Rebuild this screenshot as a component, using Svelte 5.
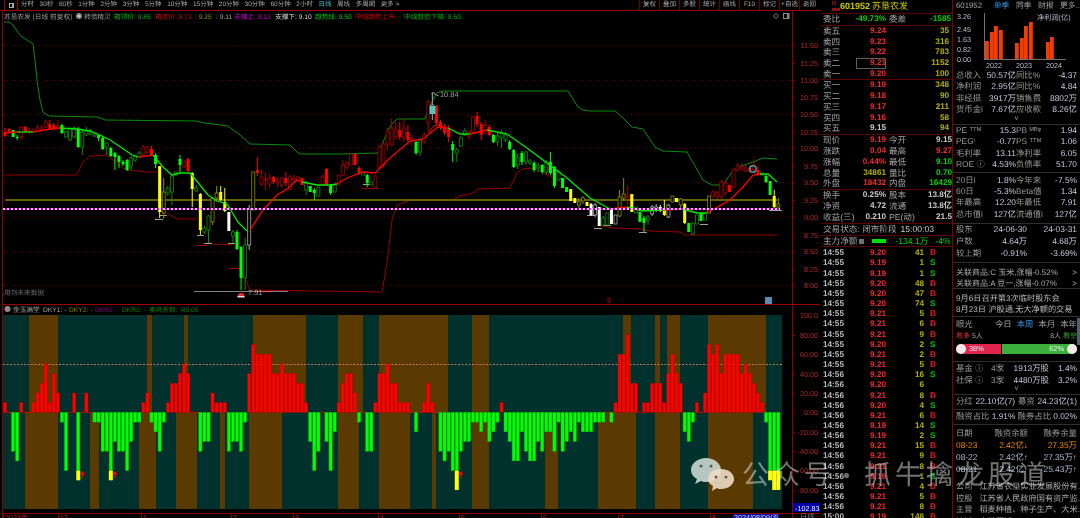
<script>
	const tabs = ['分时','30秒','60秒','1分钟','2分钟','3分钟','5分钟','10分钟','15分钟','20分钟','30分钟','60分钟','2小时','日线','周线','多周期','更多 >'];
	const tools = ['复权','叠加','多股','统计','画线','F10','标记','+自选','返回'];

	const legend = [
		[4,'苏垦农发 (日线 前复权)','#9a9a9a'],[84,'转债精灵','#9a9a9a'],[114,'箱顶价: 9.85','#00b000'],
		[155,'箱底价: 8.73','#c01010'],[195,': 9.25','#909000'],[216,': 9.11','#a0a0a0'],
		[234,'支撑上: 9.12','#d000d0'],[275,'支撑下: 9.10','#d8d8d8'],[315,'趋势线: 9.50','#00c800'],
		[355,'中线趋势上升: -','#e00000'],[404,'中线趋势下降: 9.50','#00b000']
	];
	const subLegend = [
		[13,'金玉满堂','#a0a0a0'],[43,'DKY1: -','#a0a0a0'],[69,'DKY2: -','#808000'],
		[95,'DKR1: -','#800080'],[122,'DKR2: -','#008000'],[149,'素高系数: -80.00','#008000']
	];
	const priceAxis = [[45,'11.50'],[63,'11.25'],[80,'11.00'],[97,'10.75'],[114,'10.50'],[132,'10.25'],[148,'10.00'],[166,'9.75'],[182,'9.50'],[200,'9.25'],[217,'9.00'],[235,'8.75'],[251,'8.50'],[269,'8.25'],[285,'8.00']];
	const gridY = [45,80,114,148,182,217,251,285];
	const subAxis = [[315,'100.0'],[335,'80.00'],[354,'60.00'],[374,'40.00'],[393,'20.00'],[412,'0.00'],[432,'-20.00'],[451,'-40.00'],[470,'-60.00'],[490,'-80.00']];
	const months = [[5,'2023年'],[60,'12'],[143,'1'],[233,'2'],[295,'3'],[380,'4'],[461,'5'],[543,'6'],[620,'7'],[712,'8']];

	// style, top, bottom, high, low (page pixels)
	const candles = [
		['R',132,136,128,137],['R',129,132,128,133],['G',130,137],['G',137,138,135,140],['r',127,137,126,140],['R',127,132,126,133],['r',131,132,128,134],['r',129,132],['r',128,131,125,132],['r',127,129,125,131],
		['r',122,127,120,128],['R',124,129,120,130],['R',125,129,123,130],['r',126,128,120,129],['G',125,133,124,134],['g',132,137,130,138],['g',129,140,127,141],['g',128,137,126,138],['G',129,147,127,148],['g',132,147,130,155],
		['g',131,135,127,136],['g',132,134,129,135],['g',134,136,132,137],['G',135,138,134,141],['G',138,149,136,150],['g',143,147,142,155],['G',148,156,147,157],['G',153,157,152,170],['G',156,162,155,168],['G',162,164,160,166],
		['G',160,170,159,171],['g',158,166,156,170],['g',156,160,155,162],['g',153,157,151,158],['r',147,154,145,155],['r',147,152,146,154],['R',149,155,146,156],['G',155,164,153,168],['Y',166,212,166,218],['y',192,213,178,219],
		['g',188,193,186,196],['g',176,192,175,205],['g',172,175],['G',159,165,155,173],['r',162,167,160,168],['R',159,171,158,172],['Y',173,189,172,207],['g',188,191,185,192],['Y',194,230,193,235],['g',228,232,226,234],
		['g',216,230,215,243],['y',198,222,197,225],['y',193,198,186,200],['Y',192,200,186,201],['Y',202,211,188,212],['W',212,231],['g',232,236,230,243],['G',232,249,230,250],['G',247,278,246,290],['g',245,278,238,290],
		['w',209,245,205,250],['y',172,210],['R',170,173,157,176],['r',177,184,170,186],['r',179,180,172,190],['r',178,184,174,188],['R',177,182,176,184],['r',181,183,177,187],['r',178,185,177,188],['R',178,183,172,186],
		['r',177,189,175,190],['r',178,180,175,183],['r',177,180,176,182],['R',178,185],['g',182,190,181,195],['G',186,192],['G',190,193,188,200],['g',187,196],['r',177,185,175,186],['R',169,185,168,186],
		['G',185,193,184,195],['g',185,192],['r',175,185],['r',165,175,160,176],['r',163,167,161,170],['r',154,165],['R',154,165],['R',168,173,166,175],['g',172,175],['G',175,183,174,187],
		['g',182,185],['r',176,187,175,187],['r',147,167,145,170],['r',144,165,142,168],['r',132,144,128,150],['r',128,145,118,146],['r',130,137,122,140],['R',130,137,122,140],['r',128,138,118,142],['R',132,140,125,143],
		['r',138,141,135,146],['G',142,153,141,155],['g',140,152,138,156],['r',135,142,132,144],['r',102,123,100,133],['w',105,113,92,120],['R',106,123,105,125],['R',122,128,120,130],['R',127,133,124,135],['R',128,137,125,142],
		['G',144,150,141,162],['g',150,153,148,162],['g',138,146,136,147],['g',131,135,128,136],['r',132,136,130,140],['r',117,132,116,133],['R',116,124,112,127],['R',124,135,122,140],['r',125,133,120,134],['R',127,135,125,136],
		['G',135,142,134,143],['g',136,142,133,146],['g',133,138,130,148],['g',135,140,132,142],['G',142,149,140,150],['G',150,167,149,168],['g',158,165,153,169],['G',153,162,151,165],['g',152,162,151,165],['g',161,163,159,165],
		['G',163,170,161,172],['g',166,168,163,172],['G',165,172,164,174],['g',162,172,160,175],['G',162,173,152,175],['G',167,186,166,188],['g',172,180,170,181],['G',178,188],['G',187,192],['Y',189,201],
		['Y',198,203],['y',202,205,198,208],['y',198,201,196,204],['Y',202,206],['W',204,215,203,216],['w',205,215,203,217],['W',207,226],['g',218,225,216,226],['g',213,225],['W',210,224],
		['w',215,224],['y',197,216,190,217],['y',194,198,178,201],['r',196,198,186,205],['Y',194,212],['g',207,213],['G',212,222],['G',218,223,216,232],['g',217,220,215,225],['w',207,214,205,216],
		['w',207,209,204,212],['W',207,211,205,212],['Y',210,215,200,216],['w',205,217,204,218],['y',196,202],['Y',198,202],['y',199,205,198,208],['Y',204,223,203,224],['G',223,232],['g',223,234,222,235],
		['g',215,224],['G',213,221],['g',213,220],['y',196,213],['r',192,196,190,198],['r',193,197,191,199],['r',182,197,180,199],['r',183,193,180,195],['R',185,192],['r',169,187],
		['r',166,170,163,172],['r',167,169,163,171],['r',168,171,165,172],['R',168,171,166,173],['r',165,170,160,172],['R',170,175,166,176],['g',173,175],['G',176,182,174,183],['G',181,195],['Y',196,207,190,208],['y',204,207,198,209]
	];
	const candleColor = { R:'#ff0000', r:'#a80000', G:'#00ff00', g:'#0c8c0c', Y:'#ffff00', y:'#8a8a00', W:'#ffffff', w:'#a8a8a8' };
	const step = 4.07;

	const darkGreen = '4,22 9,22 13,25 17,31 21,36 27,40 33,44 35,60 37,80 40,100 43,112 47,115 50,116 98,117 105,120 196,121 205,123 228,126 233,130 240,135 250,144 290,145 297,152 300,154 340,154 378,153 382,145 388,130 392,124 397,119 425,119 428,110 432,102 437,93 443,91 568,91 578,107 583,110 590,111 615,111 622,117 632,127 643,129 655,147 663,151 687,152 703,180 712,185 723,185 732,172 738,167 753,162 763,158 777,159';
	const darkRed = [
		'5,175 77,175 83,162 90,156 107,155 113,160 123,168 128,170 147,172 157,172',
		'167,213 177,219 197,219',
		'207,242 213,244 233,245',
		'245,278 250,290 382,292 387,263 392,220 397,205 410,200 453,200 460,196 473,193 478,189 510,188 517,173 522,169 530,168 540,171 552,177',
		'598,225 613,228 640,229 650,231 680,232 685,235 777,235'
	];
	const bright = [
		['#ff0000','5,133 17,132'],['#00e800','17,132 33,132'],['#ff0000','33,132 50,129 60,128'],
		['#00e800','60,128 77,129 90,131 100,135 110,140 122,148 132,155 138,157'],['#ff0000','138,157 153,155'],
		['#00e800','153,155 163,167 172,175 180,173 190,173 200,185 208,195 217,201 227,204 238,222 247,231'],
		['#ff0000','250,230 263,210 277,195 287,189 297,180 302,182'],['#00e800','302,182 317,185 330,185 337,184'],
		['#ff0000','337,184 347,178 363,172 375,173 390,158 410,141 423,139 438,127 448,128'],
		['#00e800','448,128 460,134 470,134'],['#ff0000','470,134 487,130'],
		['#00e800','487,130 507,134 527,148 543,160 567,178 590,198 610,209'],['#ff0000','610,209 627,207'],
		['#00e800','627,207 643,211 663,210'],['#ff0000','663,210 682,209'],['#00e800','682,209 697,213 707,213'],
		['#ff0000','707,213 730,200 743,187 753,175 760,174'],['#00e800','760,174 768,174 777,182']
	];
	const footMarks = [
		[155,163,219,'#a0a0a0'],[160,167,215,'#a0a0a0'],[197,204,235,'#a0a0a0'],[204,212,243,'#a0a0a0'],[228,235,243,'#a0a0a0'],
		[363,370,184,'#a0a0a0'],[362,378,188,'#a00000'],[196,208,245,'#a00000'],[228,240,268,'#a00000'],
		[587,595,215,'#a0a0a0'],[594,602,228,'#a0a0a0'],[603,611,225,'#a0a0a0'],[639,647,232,'#a0a0a0'],[700,708,224,'#a0a0a0'],[769,782,210,'#a0a0a0']
	];

	const bands = {
		top: [[29,58],[147,152],[184,188],[253,306],[338,363],[379,448],[472,489],[623,631],[655,660],[667,680],[708,766]],
		bottom: [[25,58],[90,99],[139,156],[176,197],[220,225],[249,282],[338,359],[379,410],[432,436],[472,489],[545,558],[598,636],[655,680],[708,753]]
	};
	// [value] or [value, yellow end]
	const bars = [
		10,0,-40,-50,10,0,0,10,20,30,50,10,40,20,-10,-60,0,20,[-60,-70],0,20,0,-10,-10,-40,-40,[-60,-70],-30,-40,-40,
		-60,-30,-10,-10,10,20,-10,-20,-40,-10,10,30,30,40,50,40,0,0,-40,-30,-30,20,10,10,10,-40,-30,-30,-40,-10,
		40,70,60,60,60,60,40,40,50,40,40,40,30,30,10,-30,-60,-40,0,-30,-60,-20,10,30,40,40,20,-10,0,-40,
		-40,10,40,40,50,30,30,10,10,10,0,
		-20,0,10,30,10,0,-40,-50,-40,-60,[-60,-80],-40,-30,-30,-10,-10,-20,-10,-30,-20,-10,10,-20,-30,-50,-50,-20,-40,-50,-50,
		-30,-40,-20,-20,-40,-10,-40,-30,-20,-30,-10,-20,-20,-20,-10,-10,-10,0,-10,10,60,60,80,30,30,0,10,10,30,30,
		30,10,40,60,40,30,-20,-30,-10,10,0,20,70,60,70,40,60,60,60,60,40,50,40,30,20,10,-10,[-60,-70],[-60,-80],[-60,-80]
	];
	const zero = 412.4;
	const unit = 0.97;
	const parsedBars = bars.map((b, i) => {
		const v = Array.isArray(b) ? b[0] : b;
		return { x: 5 + i * step, v, end: Array.isArray(b) ? b[1] : null };
	});
	const arrows = parsedBars.filter((b) => b.end !== null && b.x < 700).map((b) => b.x + 4.3);

	const sell = [['卖五','9.24','35'],['卖四','9.23','316'],['卖三','9.22','783'],['卖二','9.21','1152'],['卖一','9.20','100']];
	const buy = [['买一','9.19','348'],['买二','9.18','90'],['买三','9.17','211'],['买四','9.16','58'],['买五','9.15','94']];
	const quote = [
		['现价','9.19','red','今开','9.15','lite'],['涨跌','0.04','red','最高','9.27','red'],['涨幅','0.44%','red','最低','9.10','green'],
		['总量','34861','olive','量比','0.70','green'],['外盘','18432','red','内盘','16429','green']
	];
	const share = [['换手','0.25%','股本','13.8亿'],['净资','4.72','流通','13.8亿'],['收益(三)','0.210','PE(动)','21.5']];
	const ticks = [
		['14:55','9.20','41','B'],['14:55','9.19','1','S'],['14:55','9.19','1','S'],['14:55','9.20','48','B'],['14:55','9.20','47','B'],['14:55','9.20','74','S'],
		['14:55','9.21','5','B'],['14:55','9.21','6','B'],['14:55','9.21','9','B'],['14:55','9.20','2','S'],['14:55','9.21','2','B'],['14:55','9.21','5','B'],
		['14:56','9.20','16','S'],['14:56','9.20','6',''],['14:56','9.21','8','B'],['14:56','9.20','4','S'],['14:56','9.21','6','B'],['14:56','9.19','14','S'],
		['14:56','9.19','2','S'],['14:56','9.21','15','B'],['14:56','9.21','9','B'],['14:56','9.21','8','B'],['14:56','9.19','1','S'],['14:56','9.21','4','B'],
		['14:56','9.21','5','B'],['14:56','9.21','8','B'],['15:00','9.19','148','B']
	];

	const profit = [[985,41],[990,32],[994,26],[999,30],[1015,43],[1020,38],[1024,26],[1029,22],[1046,42],[1050,37]];
	const fin1 = [['总收入','50.57亿','同比%','-4.37'],['净利润','2.95亿','同比%','4.84'],['非经损','3917万','销售费','8802万'],['货币金i','7.67亿','应收款','8.26亿']];
	const fin2 = [['PE ᵀᵀᴹ','15.3','PB ᴹᴿᵠ','1.94'],['PEGⁱ','-0.77','PS ᵀᵀᴹ','1.06'],['毛利率','13.11','净利率','6.05'],['ROE ⓘ','4.53%','负债率','51.70']];
	const fin3 = [['20日i','1.8%','今年来','-7.5%'],['60日','-5.3%','Beta值','1.34'],['年最高','12.20','年最低','7.91'],['总市值i','127亿','流通值i','127亿']];
	const holders = [['股东','24-06-30','24-03-31'],['户数','4.64万','4.68万'],['较上期','-0.91%','-3.69%']];
	const funds = [['基金 ⓘ','4家','1913万股','1.4%'],['社保 ⓘ','3家','4480万股','3.2%']];
	const margin = [['08-23','2.42亿↓','27.35万','hot'],['08-22','2.42亿↑','27.35万↑',''],['08-21','2.42亿↑','25.43万↑','']];
	const profile = [['公司','江苏省农垦实业发展股份有...'],['控股','江苏省人民政府国有资产监...'],['主营','稻麦种植、种子生产、大米...'],['地域','安徽区域']];
</script>

<div class="screen">
	<div class="left">
		<div class="toolbar">
			<div class="win-btn"><span></span></div>
			<div class="tabs">
				{#each tabs as t}
					<span class:active={t === '日线'}>{t}</span>
				{/each}
			</div>
			<div class="tools">
				{#each tools as t}
					<span>{t}</span>
				{/each}
			</div>
		</div>

		<svg class="chart" width="820" height="507" viewBox="0 11 820 507">
			<!-- frame -->
			<line x1="2.5" y1="11" x2="2.5" y2="518" stroke="#8c0000" />
			<line x1="792.5" y1="11" x2="792.5" y2="518" stroke="#8c0000" />
			<line x1="820.5" y1="11" x2="820.5" y2="518" stroke="#8c0000" />
			<line x1="2" y1="304.5" x2="820" y2="304.5" stroke="#a00000" />
			<line x1="2" y1="513.5" x2="820" y2="513.5" stroke="#8c0000" />

			<!-- legends -->
			{#each legend as [x, label, color]}
				<text {x} y="18.5" class="legend" fill={color}>{label}</text>
			{/each}
			<circle cx="79" cy="16" r="3" fill="#8a8a8a" />
			<circle cx="79" cy="16" r="1.2" fill="#d0d0d0" />
			<path d="M776 13.5l2.5 2.5-2.5 2.5-2.5-2.5z" fill="none" stroke="#888" />
			<rect x="783.5" y="13.5" width="5.5" height="5" fill="none" stroke="#888" />
			<rect x="787" y="14" width="2" height="4" fill="#888" />

			<!-- price chart -->
			{#each gridY as y}
				<line x1="3" y1={y + 0.5} x2="792" y2={y + 0.5} stroke="#5c0000" stroke-dasharray="1 3" />
			{/each}
			<polyline points={darkGreen} class="trend" stroke="#0a8c0a" />
			{#each darkRed as points}
				<polyline {points} class="trend" stroke="#960000" />
			{/each}
			<line x1="5" y1="200" x2="777" y2="200" stroke="#808000" stroke-width="1.4" />
			{#each footMarks as [x1, x2, y, color]}
				<line {x1} {x2} y1={y + 0.5} y2={y + 0.5} stroke={color} />
			{/each}
			{#each candles as [style, top, bottom, high, low], i}
				{@const x = 5 + i * step}
				{@const solid = style === style.toUpperCase()}
				<line x1={x} x2={x} y1={high ?? top} y2={low ?? bottom} stroke={candleColor[style]} />
				<rect
					x={x - 1.5}
					y={top}
					width="3"
					height={Math.max(bottom - top, 1)}
					fill={solid ? candleColor[style] : '#000'}
					stroke={candleColor[style]}
					stroke-width={solid ? 0 : 0.8}
				/>
			{/each}
			{#each bright as [color, points]}
				<polyline {points} class="main-line" stroke={color} />
			{/each}
			<line x1="3" y1="209" x2="780" y2="209" stroke="#d000d0" stroke-width="1.4" />
			<line x1="3" y1="209" x2="780" y2="209" stroke="#ffffff" stroke-width="1.4" stroke-dasharray="2 2" />

			<!-- markers -->
			<rect x="429.5" y="106" width="6" height="8" fill="#4ec8c0" />
			<path d="M433 98l-1-5 3 0M434 94l5 2" fill="none" stroke="#909090" />
			<text x="440" y="97" class="mark">10.84</text>
			<path d="M430 134a8 8 0 0 1 16-2" fill="none" stroke="#ff0000" />
			<circle cx="753" cy="169" r="3.2" fill="none" stroke="#4c9aa0" stroke-width="1.4" />
			<line x1="194" y1="291.5" x2="288" y2="291.5" stroke="#808080" />
			<line x1="255" y1="291.5" x2="272" y2="291.5" stroke="#e06060" />
			<text x="248" y="295" class="mark">7.91</text>
			<path d="M237.5 297a3.5 4 0 0 1 7 0z" fill="#e03030" />
			<rect x="237.5" y="296" width="7" height="1.5" fill="#f0d8d8" />
			<text x="4" y="295" class="legend" fill="#6a6a6a">用到未来数据</text>
			<text x="607" y="303" class="mark dollar">$</text>
			<rect x="765" y="297" width="7" height="7" fill="#5d88b0" />

			<!-- price axis -->
			{#each priceAxis as [y, label]}
				<line x1="792" x2="795" y1={y + 0.5} y2={y + 0.5} stroke="#8c0000" />
				<text x="818" y={y + 3} class="axis" text-anchor="end">{label}</text>
			{/each}

			<!-- indicator header -->
			<circle cx="7.5" cy="309" r="3" fill="#8a8a8a" />
			{#each subLegend as [x, label, color]}
				<text {x} y="312" class="legend" fill={color}>{label}</text>
			{/each}

			<!-- indicator chart -->
			<rect x="3" y="315" width="779" height="194" fill="#00312c" />
			{#each bands.top as [a, b]}
				<rect x={a} y="315" width={b - a} height="97.4" fill="#5a3a00" />
			{/each}
			{#each bands.bottom as [a, b]}
				<rect x={a} y={zero} width={b - a} height="96.6" fill="#5a3a00" />
			{/each}
			<line x1="3" x2="782" y1="364.5" y2="364.5" stroke="#e08870" stroke-dasharray="2 1.5" stroke-width="0.8" />
			{#each parsedBars as b}
				{#if b.v === 0}
					<line x1={b.x - 2} x2={b.x + 2} y1={zero} y2={zero} stroke="#e00000" />
				{:else if b.v > 0}
					<rect x={b.x - 1.6} y={zero - b.v * unit} width="3.2" height={b.v * unit} fill="#ff0000" stroke="#c00000" stroke-width="0.4" />
				{:else}
					<rect x={b.x - 1.6} y={zero} width="3.2" height={-b.v * unit} fill="#00ff00" stroke="#00c000" stroke-width="0.4" />
				{/if}
				{#if b.end !== null}
					<rect x={b.x - 2} y={zero - b.v * unit} width="4" height={(b.v - b.end) * unit} fill="#ffff00" />
				{/if}
			{/each}
			{#each arrows as x}
				<path d="M{x} 478v-6M{x - 2} 475l2-3 2 3" fill="none" stroke="#ff0000" stroke-width="1.1" />
			{/each}

			<!-- indicator axis -->
			{#each subAxis as [y, label]}
				<line x1="792" x2="795" y1={y + 0.5} y2={y + 0.5} stroke="#8c0000" />
				<text x="818" y={y + 3} class="axis" text-anchor="end">{label}</text>
			{/each}
			<rect x="793" y="503" width="27" height="9" fill="#0000a8" />
			<text x="795" y="510.5" class="axis light">-102.83</text>
			<text x="800" y="519" class="axis gray">日线</text>

			<!-- date axis -->
			{#each months as [x, label]}
				<line x1={x - 1.5} x2={x - 1.5} y1="513" y2="518" stroke="#8c0000" />
				<text {x} y="520" class="axis">{label}</text>
			{/each}
			<rect x="733" y="514" width="46" height="5" fill="#1010a0" />
			<text x="734" y="520" class="axis pale">2024/08/09/五</text>
		</svg>
	</div>

	<div class="quote">
		<div class="q-head">
			<span class="r-badge">R</span>
			<span class="code">601952</span>
			<span class="name">苏垦农发</span>
		</div>
		<div class="q-ratio rowline">
			<span class="lbl">委比</span><span class="val green">-49.73%</span>
			<span class="lbl">委差</span><span class="val green">-1585</span>
		</div>
		<div class="book rowline">
			{#each sell as [label, price, vol]}
				<div class="book-row">
					<span class="lbl">{label}</span>
					<span class="val red" class:picked={price === '9.21'}>{price}</span>
					<span class="val olive">{vol}</span>
				</div>
			{/each}
		</div>
		<div class="book rowline">
			{#each buy as [label, price, vol]}
				<div class="book-row">
					<span class="lbl">{label}</span>
					<span class="val {price === '9.15' ? 'lite' : 'red'}">{price}</span>
					<span class="val olive">{vol}</span>
				</div>
			{/each}
		</div>
		<div class="book rowline">
			{#each quote as [a, av, ac, b, bv, bc]}
				<div class="four">
					<span class="lbl">{a}</span><span class="val {ac}">{av}</span>
					<span class="lbl">{b}</span><span class="val {bc}">{bv}</span>
				</div>
			{/each}
		</div>
		<div class="share rowline">
			{#each share as [a, av, b, bv]}
				<div class="four">
					<span class="lbl">{a}</span><span class="val lite">{av}</span>
					<span class="lbl">{b}</span><span class="val lite">{bv}</span>
				</div>
			{/each}
		</div>
		<div class="status rowline">
			<span class="lbl">交易状态: 闭市阶段</span><span class="lite">15:00:03</span>
		</div>
		<div class="flow rowline">
			<span class="lbl">主力净额</span>
			<i class="flow-dot"></i>
			<i class="flow-bar"></i>
			<span class="green flow-val">-134.1万</span>
			<span class="green flow-pct">-4%</span>
		</div>
		<div class="ticks">
			{#each ticks as [time, price, vol, side]}
				<div class="tick">
					<span class="time">{time}</span>
					<span class="val red">{price}</span>
					<span class="val olive">{vol}</span>
					<span class="side" class:buy={side === 'B'} class:sell={side === 'S'}>{side}</span>
				</div>
			{/each}
		</div>
	</div>

	<div class="finance">
		<div class="f-head">
			<span class="f-code">601952</span>
			<span class="blue f-tab1">单季</span><span>同季</span><span>财报</span><span>更多..</span>
		</div>
		<div class="profit">
			<svg width="127" height="60" viewBox="953 10 127 60">
				{#each [[19,'3.26'],[32,'2.45'],[42,'1.63'],[52,'0.82'],[62,'0.00']] as [y, label]}
					<text x="957" {y} class="f-axis">{label}</text>
				{/each}
				<line x1="984.5" y1="13" x2="984.5" y2="60" stroke="#707070" />
				<line x1="984" y1="59.5" x2="1066" y2="59.5" stroke="#707070" />
				{#each profit as [x, y]}
					<rect {x} {y} width="3.8" height={59 - y} fill="#f43c00" />
				{/each}
				<text x="986" y="68" class="f-axis">2022</text>
				<text x="1016" y="68" class="f-axis">2023</text>
				<text x="1046" y="68" class="f-axis">2024</text>
				<text x="1037" y="20" class="f-axis">净利润(亿)</text>
			</svg>
		</div>
		<div class="sec s-a rowline">
			{#each fin1 as [a, av, b, bv]}
				<div class="f-row"><span class="f-lbl">{a}</span><span class="f-val">{av}</span><span class="f-lbl">{b}</span><span class="f-val">{bv}</span></div>
			{/each}
			<div class="more">v</div>
		</div>
		<div class="sec s-b rowline">
			{#each fin2 as [a, av, b, bv]}
				<div class="f-row"><span class="f-lbl">{a}</span><span class="f-val">{av}</span><span class="f-lbl">{b}</span><span class="f-val">{bv}</span></div>
			{/each}
		</div>
		<div class="sec s-c rowline">
			{#each fin3 as [a, av, b, bv]}
				<div class="f-row"><span class="f-lbl">{a}</span><span class="f-val">{av}</span><span class="f-lbl">{b}</span><span class="f-val">{bv}</span></div>
			{/each}
		</div>
		<div class="sec s-d rowline">
			{#each holders as [a, b, c]}
				<div class="h-row"><span class="f-lbl">{a}</span><span class="f-val">{b}</span><span class="f-val">{c}</span></div>
			{/each}
		</div>
		<div class="sec s-e rowline">
			<div class="link-row"><span>关联商品:C 玉米,涨幅-0.52%</span><span>&gt;</span></div>
			<div class="link-row"><span>关联商品:A 豆一,涨幅-0.07%</span><span>&gt;</span></div>
		</div>
		<div class="sec s-f rowline">
			<div class="note">9月6日召开第3次临时股东会</div>
			<div class="note">8月23日 沪股通,无大净额的交易</div>
		</div>
		<div class="sec s-g rowline">
			<div class="eye-top">
				<span class="f-lbl">眼光</span>
				<span class="periods"><span>今日</span><span class="blue">本周</span><span>本月</span><span>本年</span></span>
			</div>
			<div class="eye-mid">
				<span><b class="bull">看多</b> 5人</span><span>8人 <b class="bear">看空</b></span>
			</div>
			<div class="vote">
				<div class="vote-red"><i></i>38%</div>
				<div class="vote-green">62%<i></i></div>
			</div>
			<div class="scroll-thumb"></div>
		</div>
		<div class="sec s-h rowline">
			{#each funds as [a, b, c, d]}
				<div class="fund-row"><span class="f-lbl">{a}</span><span class="f-lbl">{b}</span><span class="f-val">{c}</span><span class="f-val">{d}</span></div>
			{/each}
			<div class="more">v</div>
		</div>
		<div class="sec s-i rowline">
			<span class="f-lbl">分红</span><span class="f-val">22.10亿(7)</span><span class="f-lbl">募资</span><span class="f-val">24.23亿(1)</span>
		</div>
		<div class="sec s-j rowline">
			<span class="f-lbl">融资占比</span><span class="f-val">1.91%</span><span class="f-lbl">融券占比</span><span class="f-val">0.02%</span>
		</div>
		<div class="sec s-k">
			<div class="m-row"><span class="f-lbl">日期</span><span class="f-lbl right">融资余额</span><span class="f-lbl right">融券余量</span></div>
			{#each margin as [d, a, b, tone]}
				<div class="m-row" class:hot={tone === 'hot'}><span>{d}</span><span class="right">{a}</span><span class="right">{b}</span></div>
			{/each}
		</div>
		<div class="sec s-l">
			{#each profile as [a, b]}
				<div class="p-row"><span class="f-lbl">{a}</span><span class="p-text">{b}</span></div>
			{/each}
		</div>
	</div>

	<div class="watermark">
		<svg width="46" height="36" viewBox="0 0 46 36">
			<path d="M16 1c8 0 15 5 15 12s-7 12-15 12c-2 0-3 0-5-1l-6 3 2-5c-4-2-6-5-6-9C1 6 8 1 16 1z" fill="#d4e2dc" opacity="0.85" />
			<path d="M31 12c7 0 13 4 13 10s-6 10-13 10c-2 0-3 0-4-1l-5 3 1-5c-3-2-5-4-5-7 0-6 6-10 13-10z" fill="#ecdcc8" opacity="0.9" />
			<circle cx="11" cy="9" r="1.6" fill="#55605a" /><circle cx="21" cy="9" r="1.6" fill="#55605a" />
			<circle cx="26" cy="20" r="1.5" fill="#6b5a45" /><circle cx="36" cy="20" r="1.5" fill="#6b5a45" />
		</svg>
		<span class="wm-text">公众号</span>
		<i></i>
		<span class="wm-text">抓牛擒龙股道</span>
	</div>
</div>

<style>
	:global(body) {
		background: #000;
	}
	.screen {
		width: 1080px;
		height: 518px;
		display: flex;
		overflow: hidden;
		position: relative;
		background: #000;
		font-family: "Liberation Sans", "Noto Sans CJK SC", sans-serif;
		text-rendering: geometricPrecision;
		filter: blur(0.3px);
	}
	.left {
		width: 821px;
		flex: none;
	}
	.toolbar {
		height: 10px;
		border-bottom: 1px solid #a00000;
		display: flex;
		align-items: center;
		font-size: 6.5px;
		line-height: 10px;
		color: #a8a8a8;
	}
	.win-btn {
		width: 12px;
		height: 10px;
		margin-left: 4px;
		border-left: 1px solid #a00000;
		border-right: 1px solid #a00000;
		display: flex;
		align-items: center;
		justify-content: center;
	}
	.win-btn span {
		width: 5px;
		height: 5px;
		border: 1px solid #aaa;
		border-right-width: 2px;
		box-sizing: border-box;
	}
	.tabs {
		display: flex;
		gap: 5.6px;
		margin-left: 3px;
	}
	.tabs span {
		white-space: nowrap;
	}
	.tabs .active {
		color: #40c8c8;
	}
	.tools {
		display: flex;
		margin-left: auto;
		margin-right: 2px;
	}
	.tools span {
		width: 20px;
		height: 10px;
		text-align: center;
		border-left: 1px solid #700000;
		box-sizing: border-box;
	}
	.chart {
		display: block;
	}
	.legend {
		font-size: 6.7px;
	}
	.trend {
		fill: none;
		stroke-width: 1;
	}
	.main-line {
		fill: none;
		stroke-width: 1.3;
	}
	.mark {
		font-size: 7.4px;
		fill: #9a9a9a;
	}
	.dollar {
		fill: #c00000;
	}
	.axis {
		font-size: 7.2px;
		fill: #b02424;
	}
	.axis.light {
		fill: #e8e8e8;
	}
	.axis.gray {
		fill: #808080;
	}
	.axis.pale {
		fill: #c8c8e8;
	}

	.quote {
		width: 131px;
		flex: none;
		font-size: 8.6px;
		line-height: 10.7px;
		border-right: 1px solid #800000;
		overflow: hidden;
	}
	.rowline {
		border-bottom: 1px solid #5c0000;
	}
	.lbl {
		color: #a0a0a0;
	}
	.val {
		text-align: right;
		white-space: nowrap;
		font-weight: bold;
		font-size: 8.2px;
	}
	.red { color: #f02828; }
	.green { color: #00d000; }
	.olive { color: #b0b000; }
	.lite { color: #c8c8c8; }
	.blue { color: #3a90e8; }
	.q-head {
		height: 13px;
		display: flex;
		align-items: center;
		border-bottom: 1px solid #5c0000;
		color: #c8c800;
		font-size: 9px;
	}
	.r-badge {
		width: 8px;
		margin-left: 11px;
		color: #e02020;
		font-size: 6px;
		line-height: 7px;
		border-bottom: 3px solid #8c1010;
		margin-top: -2px;
	}
	.code {
		font-weight: bold;
		margin-right: 2px;
	}
	.q-ratio {
		display: grid;
		grid-template-columns: 26px 37px 3px 25px 37px;
		height: 11px;
		padding-left: 2px;
	}
	.q-ratio .lbl:nth-of-type(3) {
		grid-column: 4;
	}
	.book-row {
		display: grid;
		grid-template-columns: 26px 37px 63px;
		height: 10.7px;
		padding-left: 2px;
	}
	.picked {
		outline: 1px solid #606060;
		outline-offset: -1px;
		margin-left: 7px;
	}
	.four {
		display: grid;
		grid-template-columns: 26px 37px 29px 37px;
		height: 10.9px;
		padding-left: 2px;
		white-space: nowrap;
	}
	.four .lbl:nth-of-type(3) {
		padding-left: 3px;
	}
	.share {
		height: 33px;
	}
	.share .four {
		height: 11px;
	}
	.status {
		height: 11px;
		padding-left: 2px;
		display: flex;
		gap: 4px;
		white-space: nowrap;
	}
	.flow {
		height: 9.5px;
		padding-left: 2px;
		display: flex;
		align-items: center;
		white-space: nowrap;
	}
	.flow-dot {
		width: 5px;
		height: 5px;
		background: #707070;
		margin-left: 2px;
	}
	.flow-bar {
		width: 14px;
		height: 4px;
		background: #00e000;
		margin-left: 8px;
	}
	.flow-val {
		margin-left: 9px;
	}
	.flow-pct {
		margin-left: 7px;
	}
	.ticks {
		padding-top: 1.5px;
	}
	.tick {
		display: grid;
		grid-template-columns: 24px 39px 38px 10px;
		height: 10.17px;
		line-height: 10.17px;
		padding-left: 2px;
		font-size: 8.2px;
	}
	.time {
		color: #b8b8b8;
		font-weight: bold;
	}
	.side {
		text-align: center;
		padding-left: 6px;
		font-weight: bold;
	}
	.side.buy { color: #e02020; }
	.side.sell { color: #00c000; }

	.finance {
		width: 127px;
		flex: none;
		font-size: 8.4px;
		line-height: 11.4px;
		color: #c0c6d0;
		overflow: hidden;
	}
	.f-head {
		height: 10px;
		display: flex;
		gap: 6.5px;
		padding-left: 3px;
		font-size: 7.8px;
		line-height: 11px;
		color: #a0a0a0;
		white-space: nowrap;
	}
	.f-code {
		width: 35px;
	}
	.f-tab1 {
		margin-left: 1px;
	}
	.profit {
		height: 60px;
	}
	.profit svg {
		display: block;
	}
	.f-axis {
		font-size: 7.2px;
		fill: #b8bcc8;
	}
	.sec {
		padding-left: 3px;
		padding-right: 3px;
		border-color: #2e2e2e;
	}
	.f-lbl {
		color: #969696;
	}
	.f-val {
		color: #c4c8d4;
		text-align: right;
		white-space: nowrap;
	}
	.f-row {
		display: grid;
		grid-template-columns: 28px 32px 28px 33px;
		height: 11.4px;
		white-space: nowrap;
	}
	.more {
		text-align: center;
		color: #9a9a9a;
		height: 6px;
		line-height: 5px;
		font-size: 7px;
	}
	.s-a { height: 54px; }
	.s-b { height: 47px; }
	.s-c { height: 51px; padding-top: 1.5px; box-sizing: border-box; }
	.s-d { height: 38px; }
	.h-row {
		display: grid;
		grid-template-columns: 28px 43px 50px;
		height: 11.8px;
		white-space: nowrap;
	}
	.s-e { height: 26px; padding-top: 4px; box-sizing: border-box; }
	.link-row {
		display: flex;
		justify-content: space-between;
		color: #a8a8a8;
		font-size: 8px;
		white-space: nowrap;
	}
	.s-f { height: 28px; padding-top: 4px; box-sizing: border-box; color: #b8b8b8; }
	.note {
		white-space: nowrap;
		font-size: 8.2px;
	}
	.s-g { height: 45px; padding-top: 2px; box-sizing: border-box; position: relative; }
	.eye-top, .eye-mid {
		display: flex;
		justify-content: space-between;
		white-space: nowrap;
	}
	.eye-top { height: 12px; }
	.periods {
		display: flex;
		gap: 5px;
		color: #a0a0a0;
	}
	.eye-mid {
		height: 13px;
		font-size: 7px;
		color: #a0a0a0;
	}
	.eye-mid b {
		font-weight: normal;
	}
	.bull { color: #d03030; }
	.bear { color: #30a030; }
	.vote {
		display: flex;
		height: 10px;
		gap: 1px;
		font-size: 7.4px;
		line-height: 10px;
		color: #f0f0f0;
	}
	.vote-red {
		width: 45px;
		background: #e0244c;
		display: flex;
		gap: 3px;
		border-radius: 5px 0 0 5px;
	}
	.vote-green {
		flex: 1;
		background: #3cb03c;
		display: flex;
		justify-content: flex-end;
		gap: 3px;
		border-radius: 0 5px 5px 0;
	}
	.vote i {
		width: 10px;
		height: 10px;
		border-radius: 50%;
		background: #f4e8e8;
	}
	.scroll-thumb {
		position: absolute;
		right: 0;
		top: 1px;
		width: 3px;
		height: 27px;
		background: #50606c;
	}
	.s-h { height: 33px; padding-top: 1px; box-sizing: border-box; }
	.fund-row {
		display: grid;
		grid-template-columns: 35px 20px 38px 28px;
		height: 11.6px;
		white-space: nowrap;
	}
	.s-i, .s-j {
		height: 14px;
		display: flex;
		justify-content: space-between;
		align-items: center;
		white-space: nowrap;
	}
	.s-k { padding-top: 3px; }
	.m-row {
		display: grid;
		grid-template-columns: 30px 42px 49px;
		height: 12px;
		color: #b0b8d0;
		white-space: nowrap;
	}
	.m-row.hot { color: #f08800; }
	.right { text-align: right; }
	.s-l { padding-top: 5px; }
	.p-row {
		display: flex;
		gap: 7px;
		height: 11.6px;
		white-space: nowrap;
		font-size: 8.2px;
	}
	.p-text { color: #a8a8a8; }

	.watermark {
		position: absolute;
		left: 690px;
		top: 457px;
		display: flex;
		align-items: center;
		height: 36px;
		pointer-events: none;
		color: rgba(225, 225, 225, 0.5);
		font-size: 27px;
		letter-spacing: 4px;
		white-space: nowrap;
	}
	.watermark svg {
		flex: none;
		margin-right: 6px;
	}
	.wm-text {
		line-height: 36px;
	}
	.watermark i {
		width: 5px;
		height: 5px;
		border-radius: 50%;
		background: rgba(225, 225, 225, 0.5);
		margin: 0 15px 0 9px;
	}
</style>
